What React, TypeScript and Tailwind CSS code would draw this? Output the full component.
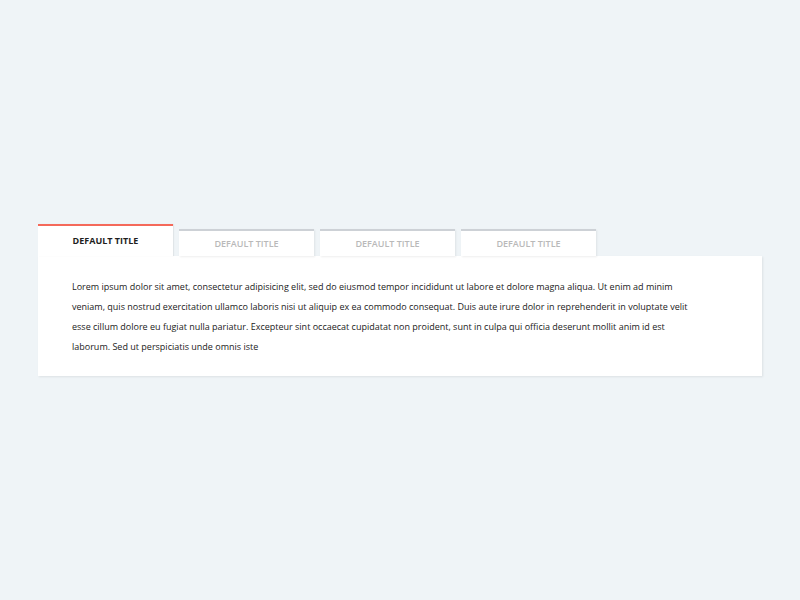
import React from "react";

const tabs = ["DEFAULT TITLE", "DEFAULT TITLE", "DEFAULT TITLE", "DEFAULT TITLE"];

export default function App() {
  return (
    <div
      className="min-h-screen w-full bg-[#eff4f7] pt-[224px] pl-[38px]"
      style={{ fontFamily: '"Open Sans", "Noto Sans", sans-serif' }}
    >
      <div className="flex items-end gap-[6px]">
        {tabs.map((t, i) =>
          i === 0 ? (
            <div
              key={i}
              className="relative z-10 flex h-[32px] w-[135px] items-center justify-center border-t-2 border-[#f4695a] bg-white text-[9px] font-bold text-[#1e1e1e] shadow-[1px_0_1px_rgba(0,0,0,0.06)]"
            >
              {t}
            </div>
          ) : (
            <div
              key={i}
              className="flex h-[27px] w-[135px] items-center justify-center border-t-2 border-[#cdd1d6] bg-white pt-[1px] text-[9px] font-semibold text-[#b9b9b9] shadow-[1px_1px_2px_rgba(0,0,0,0.07)]"
            >
              {t}
            </div>
          )
        )}
      </div>
      <div className="h-[120px] w-[724px] bg-white px-[34px] pt-[21px] shadow-[1px_1px_2px_rgba(0,0,0,0.08)]">
        <p className="w-[630px] text-[9px] leading-[20px] text-[#222]">
          Lorem ipsum dolor sit amet, consectetur adipisicing elit, sed do eiusmod tempor incididunt ut labore et
          dolore magna aliqua. Ut enim ad minim veniam, quis nostrud exercitation ullamco laboris nisi ut aliquip ex
          ea commodo consequat. Duis aute irure dolor in reprehenderit in voluptate velit esse cillum dolore eu fugiat
          nulla pariatur. Excepteur sint occaecat cupidatat non proident, sunt in culpa qui officia deserunt mollit
          anim id est laborum. Sed ut perspiciatis unde omnis iste
        </p>
      </div>
    </div>
  );
}
